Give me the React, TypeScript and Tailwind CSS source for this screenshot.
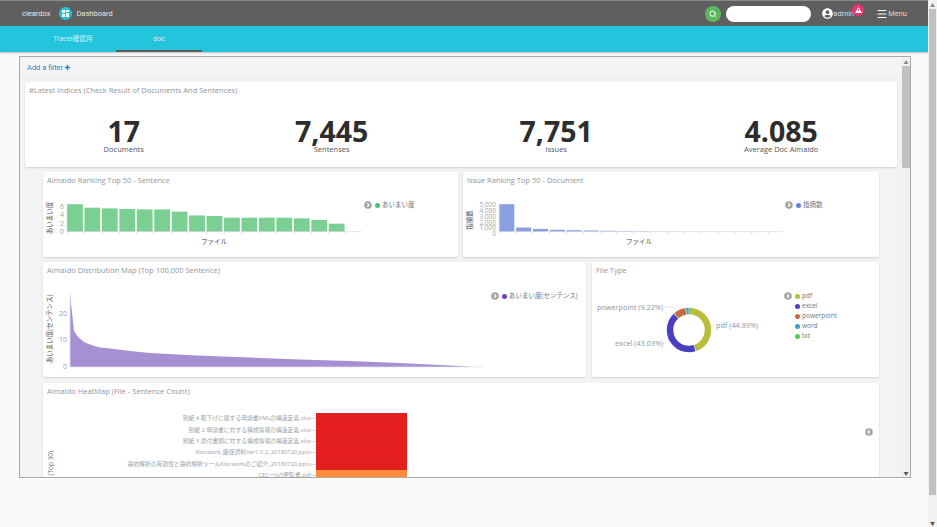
import React from 'react';
import { Menu, Plus, Search } from 'lucide-react';
import { FaUserCircle } from 'react-icons/fa';

const sans = 'font-["Open_Sans","Noto_Sans_CJK_JP",sans-serif]';
const roboto = 'font-["Roboto","Noto_Sans_CJK_JP",sans-serif]';

const rankBars = [27.5, 24, 23.3, 22.7, 22.3, 22.3, 20, 16.3, 15.7, 14, 14, 14, 14, 13.3, 11.7, 8];
const issueBars = [27.5, 4.2, 2.8, 1.9, 1.5, 1.2, 0.9, 0.6, 0.4, 0.3, 0.2];

function Toggle({ left }: { left?: boolean }) {
  return (
    <svg width="8" height="8" viewBox="0 0 8 8" className="shrink-0">
      <circle cx="4" cy="4" r="3.8" fill="#a3a3a3" />
      <path d={left ? 'M4.8 2.2 3 4l1.8 1.8' : 'M3.2 2.2 5 4 3.2 5.8'} fill="none" stroke="#fff" strokeWidth="1.2" />
    </svg>
  );
}

function Card({ title, className, children }: { title: string; className: string; children: React.ReactNode }) {
  return (
    <div className={`bg-white rounded-[2px] shadow-[0_1px_2px_rgba(0,0,0,0.14)] ${className}`}>
      <div className="h-[15px] pl-[4px] pt-[2px] text-[7.5px] leading-[12px] text-[#8f979c] whitespace-nowrap">{title}</div>
      {children}
    </div>
  );
}

function Stat({ value, label }: { value: string; label: string }) {
  return (
    <div className="flex flex-col items-center">
      <div className="text-[28.5px] leading-[27px] font-bold text-[#2d2d2d]">{value}</div>
      <div className="text-[7.5px] leading-[9px] text-[#555]">{label}</div>
    </div>
  );
}

function LegendRow({ color, label, toggle }: { color: string; label: string; toggle?: boolean }) {
  return (
    <div className="flex items-center h-[10px] whitespace-nowrap">
      <span className="w-[11px] flex">{toggle && <Toggle />}</span>
      <span className="w-[5px] h-[5px] rounded-full mr-[2px]" style={{ backgroundColor: color }} />
      <span className="text-[6.5px] text-[#6f7679]">{label}</span>
    </div>
  );
}

function AxisTicks({ from, to, step, y }: { from: number; to: number; step: number; y: number }) {
  const xs: number[] = [];
  for (let x = from; x <= to; x += step) xs.push(x);
  return (
    <g stroke="#d8dadc" strokeWidth="0.7">
      <path d={`M${from} ${y}H${to}`} />
      {xs.map((x) => (
        <path key={x} d={`M${x} ${y}v3`} />
      ))}
    </g>
  );
}

function RankChart() {
  return (
    <svg width="321" height="70" viewBox="0 0 321 70" className={`shrink-0 ${sans}`}>
      {rankBars.map((h, i) => (
        <rect key={i} x={24 + i * 17.45} y={44.7 - h} width="15.8" height={h} fill="#7bcf93" />
      ))}
      <AxisTicks from={24} to={319} step={17.45} y={44.7} />
      <path d="M24 17v28" stroke="#d8dadc" strokeWidth="0.7" />
      <g fontSize="7" fill="#a0a6a9" textAnchor="end">
        <text x="21" y="21.8">6</text>
        <text x="21" y="30.4">4</text>
        <text x="21" y="38.8">2</text>
        <text x="21" y="47.2">0</text>
      </g>
      <text x="9" y="31" fontSize="6.5" fill="#6f7679" textAnchor="middle" transform="rotate(-90 9 31)" fontWeight="500">あいまい度</text>
      <text x="171" y="56.5" fontSize="6.5" fill="#6f7679" textAnchor="middle" fontWeight="500">ファイル</text>
    </svg>
  );
}

function IssueChart() {
  return (
    <svg width="322" height="70" viewBox="0 0 322 70" className={`shrink-0 ${sans}`}>
      {issueBars.map((h, i) => (
        <rect key={i} x={36.3 + i * 16.85} y={44.7 - h} width="15" height={h} fill="#8a9fe0" />
      ))}
      <AxisTicks from={36} to={320} step={16.85} y={44.7} />
      <path d="M36 16.5v28" stroke="#d8dadc" strokeWidth="0.7" />
      <g fontSize="6.5" fill="#a0a6a9" textAnchor="end">
        <text x="33" y="20">5,000</text>
        <text x="33" y="26">4,000</text>
        <text x="33" y="32">3,000</text>
        <text x="33" y="37.6">2,000</text>
        <text x="33" y="43.4">1,000</text>
        <text x="33" y="49">0</text>
      </g>
      <text x="9" y="33" fontSize="6.5" fill="#6f7679" textAnchor="middle" transform="rotate(-90 9 33)" fontWeight="500">指摘数</text>
      <text x="176" y="56.5" fontSize="6.5" fill="#6f7679" textAnchor="middle" fontWeight="500">ファイル</text>
    </svg>
  );
}

function DistributionChart() {
  return (
    <svg width="445" height="100" viewBox="0 0 445 100" className={`shrink-0 ${sans}`}>
      <path
        d="M27 15L28 27L29 35L31 54L35 60L41 65L47 67.5L53 69.5L57 70.5L67 71.5L87 74L107 76L154 78.5L207 80.5L257 82.5L307 84L357 86L407 88.5L432 90H27Z"
        fill="#a78fd4"
      />
      <path d="M27 15V90H440" stroke="#e4e2ee" strokeWidth="0.7" fill="none" />
      <g fontSize="7" fill="#a0a6a9" textAnchor="end">
        <text x="24" y="39">20</text>
        <text x="24" y="65">10</text>
        <text x="24" y="92">0</text>
      </g>
      <text x="9" y="52" fontSize="6.5" fill="#6f7679" textAnchor="middle" transform="rotate(-90 9 52)" fontWeight="500">あいまい度(センテンス)</text>
    </svg>
  );
}

function Donut() {
  const r = 19;
  const c = 2 * Math.PI * r;
  const parts = [
    { p: 44.89, color: '#b8bd3a' },
    { p: 43.03, color: '#4a3fc0' },
    { p: 9.22, color: '#c8693f' },
    { p: 2.5, color: '#3ea0cc' },
    { p: 0.36, color: '#57c84d' },
  ];
  let offset = 0;
  return (
    <svg width="197" height="100" viewBox="0 0 197 100" className={`shrink-0 ${sans}`}>
      <g transform="rotate(-90 97 53)">
        {parts.map(({ p, color }) => {
          const len = (p / 100) * c;
          const el = (
            <circle
              key={color}
              cx="97"
              cy="53"
              r={r}
              fill="none"
              stroke={color}
              strokeWidth="6.5"
              strokeDasharray={`${Math.max(len - 0.6, 0.2)} ${c}`}
              strokeDashoffset={-offset}
            />
          );
          offset += len;
          return el;
        })}
      </g>
      <g fontSize="7.3" fill="#8f979c">
        <text x="5" y="32.5">powerpoint (9.22%)</text>
        <text x="23" y="68.5">excel (43.03%)</text>
        <text x="124" y="50.5">pdf (44.89%)</text>
      </g>
      <path d="M73 30h9l3 3M71 66h3l3-3M117 49h5" stroke="#ccc" strokeWidth="0.6" fill="none" />
    </svg>
  );
}

function HeatRow({ label, color }: { label: string; color: string }) {
  return (
    <div className="flex items-center h-[11.35px]">
      <span className="w-[256px] text-right text-[5.8px] leading-[11px] text-[#9aa1a5] whitespace-nowrap">{label}</span>
      <span className="w-[5px] h-px bg-[#ddd]" />
      <span className="w-[91px] h-full border-b border-[#d91f1f]/70" style={{ backgroundColor: color }} />
    </div>
  );
}

export default function App() {
  return (
    <div className={`flex w-[937px] h-[527px] overflow-hidden bg-[#fafafa] ${roboto}`}>
      <div className="w-[928px] flex flex-col">
        <header className="h-[26px] bg-[#5f5f5f] border-t border-[#8a8a8a] flex items-center text-[7.5px] text-[#e6e6e6]">
          <span className="ml-[22px]">cleardox</span>
          <span className="ml-[9px] w-[13px] h-[13px] rounded-full bg-[#22c5db] flex items-center justify-center">
            <svg width="7" height="7" viewBox="0 0 7 7" fill="#fff">
              <rect width="3" height="3" />
              <rect x="4" width="3" height="2" />
              <rect y="4" width="3" height="3" />
              <rect x="4" y="3" width="3" height="4" />
            </svg>
          </span>
          <span className="ml-[4px]">Dashboard</span>
          <span className="ml-auto w-[16px] h-[16px] rounded-full bg-[#5cb85c] flex items-center justify-center">
            <Search size={8} strokeWidth={3} color="#fff" />
          </span>
          <span className="ml-[5px] w-[85px] h-[16px] rounded-full bg-white" />
          <FaUserCircle className="ml-[11px] text-white" size={11} />
          <span className="relative text-[#d8d8d8]">
            admin
            <span className="absolute -top-[4px] -right-[10px] w-[12px] h-[12px] rounded-full bg-[#e8336d] flex items-center justify-center">
              <svg width="7" height="6" viewBox="0 0 7 6">
                <path d="M3.5 0 7 6H0z" fill="#fff" />
                <path d="M3.5 2v2" stroke="#e8336d" strokeWidth="0.8" />
              </svg>
            </span>
          </span>
          <Menu className="ml-[22px] text-white" size={12} strokeWidth={2} />
          <span className="mr-[21px] text-[#d8d8d8]">Menu</span>
        </header>

        <nav className="h-[26px] bg-[#22c5db] flex pl-[30px] text-[7.5px] text-[#cfeff4] shadow-[0_1px_2px_rgba(0,0,0,0.25)]">
          <div className="w-[86px] flex items-center justify-center text-[6.8px]">Tracer確認用</div>
          <div className="w-[86px] flex items-center justify-center border-b-2 border-[#5a5a5a] pt-[2px]">doc</div>
        </nav>

        <main className="mt-[4px] ml-[19px] w-[892px] h-[422px] border border-[#a8a8a8] bg-[#f3f3f3] flex overflow-hidden">
          <div className={`flex-1 min-w-0 overflow-hidden ${sans}`}>
            <div className={`h-[22px] border-b border-[#ececec] pl-[7px] flex items-center text-[7.5px] text-[#1b8ec2] ${roboto}`}>
              Add a filter
              <Plus size={7} strokeWidth={5} className="ml-[1px]" />
            </div>
            <Card title="#Latest Indices (Check Result of Documents And Sentences)" className="mt-[3px] ml-[5px] w-[872px] h-[85px]">
              <div className="flex justify-around px-[3px] pt-[21px]">
                <Stat value="17" label="Documents" />
                <Stat value="7,445" label="Sentenses" />
                <Stat value="7,751" label="Issues" />
                <Stat value="4.085" label="Average Doc Aimaido" />
              </div>
            </Card>

            <div className="ml-[23px] w-[836px] mt-[5px] flex gap-[5px]">
              <Card title="Aimaido Ranking Top 50 - Sentence" className="w-[415px] h-[85px]">
                <div className="flex">
                  <RankChart />
                  <div className="pt-[13px]">
                    <LegendRow toggle color="#4fc27a" label="あいまい度" />
                  </div>
                </div>
              </Card>
              <Card title="Issue Ranking Top 50 - Document" className="flex-1 h-[85px]">
                <div className="flex">
                  <IssueChart />
                  <div className="pt-[13px]">
                    <LegendRow toggle color="#6680dc" label="指摘数" />
                  </div>
                </div>
              </Card>
            </div>

            <div className="ml-[23px] w-[836px] mt-[5px] flex gap-[6px]">
              <Card title="Aimaido Distribution Map (Top 100,000 Sentence)" className="w-[543px] h-[115px]">
                <div className="flex">
                  <DistributionChart />
                  <div className="pt-[14px] ml-[3px]">
                    <LegendRow toggle color="#6f3fc0" label="あいまい度(センテンス)" />
                  </div>
                </div>
              </Card>
              <Card title="File Type" className="flex-1 h-[115px]">
                <div className="flex">
                  <Donut />
                  <div className="pt-[14px] -ml-[5px] flex flex-col">
                    <LegendRow toggle color="#b8bd3a" label="pdf" />
                    <LegendRow color="#4a3fc0" label="excel" />
                    <LegendRow color="#c8693f" label="powerpoint" />
                    <LegendRow color="#3ea0cc" label="word" />
                    <LegendRow color="#57c84d" label="txt" />
                  </div>
                </div>
              </Card>
            </div>

            <Card title="Aimaido HeatMap (File - Sentence Count)" className="ml-[23px] w-[836px] mt-[6px] h-[200px]">
              <div className="flex pt-[15px]">
                <div className="w-[12px] ml-[2px] h-[100px] relative">
                  <span className="absolute left-[1px] top-[38px] [writing-mode:vertical-rl] rotate-180 text-[6.5px] font-medium text-[#6f7679] whitespace-nowrap">ファイル (Top 30)</span>
                </div>
                <div className="ml-[-2px] flex flex-col">
                  <HeatRow label="別紙 4 取下げに関する申請書XMLの構造定義.xlsx" color="#e41e1e" />
                  <HeatRow label="別紙 2 申請書に対する構成情報の構造定義.xlsx" color="#e41e1e" />
                  <HeatRow label="別紙 3 添付書類に対する構成情報の構造定義.xlsx" color="#e41e1e" />
                  <HeatRow label="Klocwork_販促資料Ver1.0.2_20180720.pptx" color="#e41e1e" />
                  <HeatRow label="静的解析の有効性と静的解析ツールKlocworkのご紹介_20180720.pptx" color="#e41e1e" />
                  <HeatRow label="CEC一IoT便覧書.pdf" color="#fd8d3c" />
                </div>
                <div className="ml-auto mr-[6px] mt-[15px]">
                  <Toggle left />
                </div>
              </div>
            </Card>
          </div>

          <div className="w-[8px] bg-[#f1f1f1] flex flex-col items-center shrink-0">
            <span className="mt-[2px] text-[#8a8a8a] text-[5px] leading-[6px]">▲</span>
            <div className="w-full h-[102px] bg-[#c1c1c1] mt-[1px]" />
            <span className="mt-auto mb-[1px] text-[#555] text-[5px] leading-[6px]">▼</span>
          </div>
        </main>
      </div>

      <div className="w-[9px] bg-[#f1f1f1] flex flex-col items-center">
        <span className="mt-[2px] text-[#8a8a8a] text-[5px] leading-[6px]">▲</span>
        <div className="w-[7px] h-[486px] bg-[#c1c1c1] mt-[1px]" />
        <span className="mt-auto mb-[1px] text-[#555] text-[5px] leading-[6px]">▼</span>
      </div>
    </div>
  );
}
